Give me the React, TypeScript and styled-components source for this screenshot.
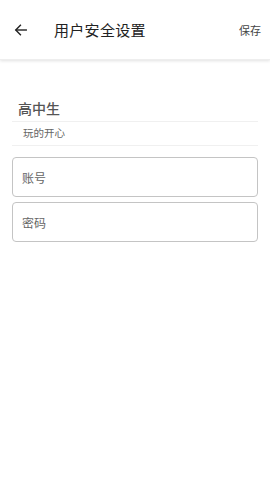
import styled, { createGlobalStyle } from 'styled-components';

const GlobalStyle = createGlobalStyle`
  html, body {
    margin: 0;
    padding: 0;
    background: #fff;
    font-family: "Noto Sans CJK SC", "Noto Sans", sans-serif;
  }
`;

const Page = styled.div`
  width: 270px;
  min-height: 480px;
  background: #fff;
`;

const Header = styled.header`
  height: 59px;
  display: flex;
  align-items: center;
  padding: 0 9px 0 12px;
  background: #fff;
  box-shadow: 0 1px 3px rgba(0, 0, 0, 0.12);
  border-bottom: 1px solid #eee;
`;

const BackBtn = styled.div`
  width: 18px;
  height: 18px;
  display: flex;
  align-items: center;
  justify-content: center;
  margin-top: 1px;
`;

const Title = styled.div`
  margin-left: 24px;
  flex: 1;
  font-size: 15px;
  color: #222;
  letter-spacing: 0.3px;
`;

const SaveBtn = styled.div`
  font-size: 11px;
  color: #444;
`;

const Profile = styled.div`
  margin: 35px 12px 0;
`;

const Name = styled.div`
  padding: 0 6px;
  height: 26px;
  line-height: 26px;
  font-size: 14px;
  font-weight: 500;
  color: #555;
  border-bottom: 1px solid #f0f0f0;
`;

const Motto = styled.div`
  padding: 0 11px;
  height: 23px;
  line-height: 22px;
  font-size: 10.5px;
  color: #666;
  border-bottom: 1px solid #f0f0f0;
`;

const Form = styled.div`
  margin: 11px 12px 0;
  display: flex;
  flex-direction: column;
  gap: 5px;
`;

const Field = styled.input`
  box-sizing: border-box;
  width: 100%;
  height: 40px;
  padding: 0 9px;
  border: 1px solid #c4c4c4;
  border-radius: 4px;
  font-family: inherit;
  font-size: 12px;
  color: #333;
  outline: none;
  background: #fff;

  &::placeholder {
    color: #666;
  }
`;

export default function App() {
  return (
    <Page>
      <GlobalStyle />
      <Header>
        <BackBtn>
          <svg width="14" height="14" viewBox="0 0 24 24" fill="none" stroke="#222" strokeWidth="2.4" strokeLinecap="square">
            <path d="M21 12H4" />
            <path d="M11 4l-8 8 8 8" />
          </svg>
        </BackBtn>
        <Title>用户安全设置</Title>
        <SaveBtn>保存</SaveBtn>
      </Header>
      <Profile>
        <Name>高中生</Name>
        <Motto>玩的开心</Motto>
      </Profile>
      <Form>
        <Field placeholder="账号" />
        <Field placeholder="密码" type="password" />
      </Form>
    </Page>
  );
}
